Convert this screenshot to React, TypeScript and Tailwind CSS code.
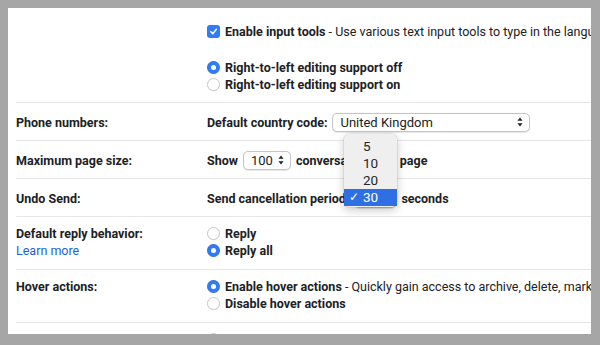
import React from 'react';

const Radio: React.FC<{ on?: boolean }> = ({ on }) =>
  on ? (
    <span className="flex h-[13px] w-[13px] shrink-0 items-center justify-center rounded-full bg-[#2f7cf6] shadow-[inset_0_0_0_0.5px_rgba(0,0,0,0.15)]">
      <span className="h-[5px] w-[5px] rounded-full bg-white" />
    </span>
  ) : (
    <span className="h-[13px] w-[13px] shrink-0 rounded-full border border-[#c9c9c9] bg-white shadow-[0_0.5px_1px_rgba(0,0,0,0.08)]" />
  );

const Checkbox: React.FC = () => (
  <span className="flex h-[13px] w-[13px] shrink-0 items-center justify-center rounded-[3px] bg-[#2f7cf6]">
    <svg width="9" height="9" viewBox="0 0 10 10">
      <path d="M2 5.2 L4.2 7.4 L8.2 2.6" fill="none" stroke="white" strokeWidth="1.7" strokeLinecap="round" strokeLinejoin="round" />
    </svg>
  </span>
);

const Arrows: React.FC = () => (
  <svg width="6" height="10" viewBox="0 0 6 10" className="shrink-0">
    <path d="M3 0.5 L5.6 3.8 L0.4 3.8 Z" fill="#222" />
    <path d="M3 9.5 L5.6 6.2 L0.4 6.2 Z" fill="#222" />
  </svg>
);

const Select: React.FC<{ value: string; width: string }> = ({ value, width }) => (
  <span
    className={`flex h-[19px] ${width} items-center justify-between rounded-[5px] border border-[#c5c5c5] bg-white pl-[7px] pr-[6px] font-normal text-[13px] text-[#222] shadow-[0_0.5px_1px_rgba(0,0,0,0.1)]`}
  >
    <span>{value}</span>
    <Arrows />
  </span>
);

const Row: React.FC<{ label?: React.ReactNode; children: React.ReactNode; pad?: string }> = ({
  label,
  children,
  pad = 'pt-[9px] pb-2',
}) => (
  <div className={`flex border-b border-[#e6e6e6] ${pad}`}>
    <div className="w-[191px] shrink-0 font-bold">{label}</div>
    <div className="flex-1 whitespace-nowrap">{children}</div>
  </div>
);

const Line: React.FC<{ children: React.ReactNode }> = ({ children }) => (
  <div className="flex h-[17px] items-center gap-[5px]">{children}</div>
);

const App: React.FC = () => (
  <div className="h-[345px] w-[600px] bg-[#a6a6a6] pb-[11px] pl-2 pr-[9px] pt-2 font-['Roboto',sans-serif] text-[12.5px] leading-[17px] text-[#202124]">
    <div className="relative h-full overflow-hidden bg-white pl-2">
      {/* language options */}
      <div className="flex border-b border-[#e6e6e6] pb-[9px] pt-[15px]">
        <div className="w-[191px] shrink-0" />
        <div className="flex-1 whitespace-nowrap">
          <Line>
            <Checkbox />
            <span>
              <b>Enable input tools</b> - Use various text input tools to type in the language of your choice
            </span>
          </Line>
          <div className="mt-[19px]">
            <Line>
              <Radio on />
              <b>Right-to-left editing support off</b>
            </Line>
            <Line>
              <Radio />
              <b>Right-to-left editing support on</b>
            </Line>
          </div>
        </div>
      </div>

      <Row label={<div className="flex h-5 items-center">Phone numbers:</div>}>
        <div className="flex h-5 items-center gap-[5px] font-bold">
          <span>Default country code:</span>
          <Select value="United Kingdom" width="w-[198px]" />
        </div>
      </Row>

      <Row label={<div className="flex h-5 items-center">Maximum page size:</div>}>
        <div className="flex h-5 items-center gap-[5px] font-bold">
          <span>Show</span>
          <Select value="100" width="w-[48px]" />
          <span>conversations per page</span>
        </div>
      </Row>

      <Row label={<div className="flex h-5 items-center">Undo Send:</div>}>
        <div className="flex h-5 items-center gap-[5px] font-bold">
          <span>Send cancellation period:</span>
          <Select value="30" width="w-[42px]" />
          <span>seconds</span>
        </div>
      </Row>

      <Row
        pad="pt-2 pb-[10px]"
        label={
          <>
            <div>Default reply behavior:</div>
            <a className="font-normal text-[#1a62d6]">Learn more</a>
          </>
        }
      >
        <Line>
          <Radio />
          <b>Reply</b>
        </Line>
        <Line>
          <Radio on />
          <b>Reply all</b>
        </Line>
      </Row>

      <Row pad="pt-2 pb-[10px]" label="Hover actions:">
        <Line>
          <Radio on />
          <span>
            <b>Enable hover actions</b> - Quickly gain access to archive, delete, mark as read and snooze controls on hover.
          </span>
        </Line>
        <Line>
          <Radio />
          <b>Disable hover actions</b>
        </Line>
      </Row>

      <Row pad="pt-2 pb-[10px]" label="Send and Archive:">
        <Line>
          <Radio />
          <b>Show "Send &amp; Archive" button in reply</b>
        </Line>
        <Line>
          <Radio on />
          <b>Hide "Send &amp; Archive" button in reply</b>
        </Line>
      </Row>

      {/* open select menu */}
      <div className="absolute left-[336px] top-[126px] w-[53px] rounded-[5px] bg-[#efefef] pb-[1px] pt-1 text-[13.5px] text-[#262626] shadow-[0_3px_10px_rgba(0,0,0,0.22),0_0_0_0.5px_rgba(0,0,0,0.12)]">
        {['5', '10', '20'].map((n) => (
          <div key={n} className="flex h-[17px] items-center pl-[19px]">
            {n}
          </div>
        ))}
        <div className="flex h-[17px] items-center bg-[#2f6fe4] pl-[5px] text-white">
          <span className="w-[14px] text-[12px]">✓</span>
          <span>30</span>
        </div>
      </div>
    </div>
  </div>
);

export default App;
